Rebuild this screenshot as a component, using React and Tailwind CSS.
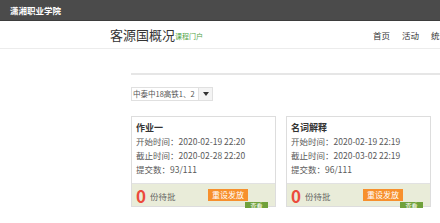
const font = { fontFamily: '"Noto Sans CJK SC", "Liberation Sans", sans-serif' };

const works = [
  { title: "作业一", start: "2020-02-19 22:20", end: "2020-02-28 22:20", count: "93/111" },
  { title: "名词解释", start: "2020-02-19 22:19", end: "2020-03-02 22:19", count: "96/111" },
];

const WorkCard = ({ work }) => (
  <div className="w-[145px] border border-[#dddddd] bg-white">
    <div className="h-[66px] px-[4px] pt-[3px] text-[8.5px] leading-[13.5px] text-[#5a5a5a]">
      <p className="text-[9px] font-bold text-[#333] leading-[15px]">{work.title}</p>
      <p>开始时间：{work.start}</p>
      <p>截止时间：{work.end}</p>
      <p className="mt-[1px]">提交数：{work.count}</p>
    </div>
    <div className="relative h-[23px] bg-[#e9ecd9] border-t border-[#e2e2e2] flex items-center pl-[4px]">
      <span className="text-[17px] font-bold text-[#ec4a3c] leading-none">0</span>
      <span className="ml-[4px] mt-[3px] text-[8.5px] text-[#666]">份待批</span>
      <div className="absolute left-[76px] top-[5px] w-[40px] h-[12px] bg-[#f7902d] text-white text-[8px] leading-[12px] text-center">
        重设发放
      </div>
      <div className="absolute left-[113px] top-[18px] w-[23px] h-[6px] bg-[#6fa13b] overflow-hidden text-white text-[6px] leading-[8px] text-center">
        查看
      </div>
    </div>
  </div>
);

export default function App() {
  return (
    <div className="w-[440px] h-[223px] overflow-hidden bg-white" style={font}>
      <div className="h-[21px] bg-[#4b4b4b] flex items-center pl-[10px] border-b border-[#3d3d3d]">
        <span className="text-white text-[8.5px] font-bold">潇湘职业学院</span>
      </div>
      <div className="h-[28px] border-b border-[#ececec] flex items-center pl-[110px]">
        <span className="text-[13px] text-[#333] leading-none">客源国概况</span>
        <span className="text-[7px] text-[#52a447] mt-[4px]">课程门户</span>
        <div className="ml-auto flex gap-[12px] text-[8.5px] text-[#333] whitespace-nowrap mr-[-8px] mt-[2px]">
          <span>首页</span>
          <span>活动</span>
          <span>统计</span>
        </div>
      </div>
      <div className="pl-[131px] pt-[24px]">
        <div className="border-t-2 border-[#e6e6e6]" />
        <div className="mt-[12px] flex h-[14px] w-[82px] border border-[#e0e0e0] bg-white">
          <span className="flex-1 text-[7.5px] text-[#555] leading-[12px] pl-[1px] whitespace-nowrap">中泰中18高铁1、2</span>
          <span className="w-[14px] border-l border-[#e0e0e0] bg-[#f4f4f4] flex items-center justify-center">
            <span className="w-0 h-0 border-l-[3px] border-r-[3px] border-t-[4px] border-l-transparent border-r-transparent border-t-[#333]" />
          </span>
        </div>
        <div className="mt-[15px] flex gap-[10px]">
          {works.map((w) => (
            <WorkCard key={w.title} work={w} />
          ))}
        </div>
      </div>
    </div>
  );
}
